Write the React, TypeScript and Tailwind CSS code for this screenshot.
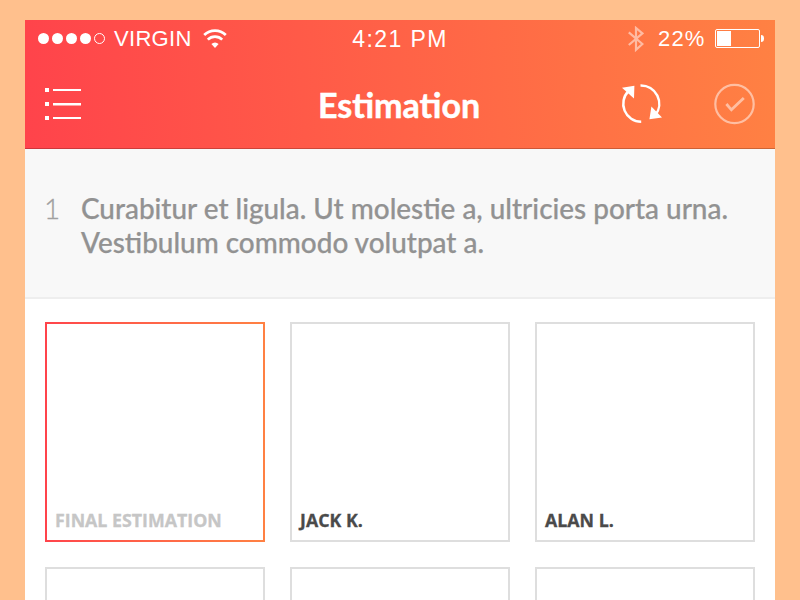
type Estimate = {
  id: string
  label: string
  final?: boolean
}

const estimates: Estimate[] = [
  { id: 'final', label: 'FINAL ESTIMATION', final: true },
  { id: 'jack', label: 'JACK K.' },
  { id: 'alan', label: 'ALAN L.' },
  { id: 'empty-1', label: '' },
  { id: 'empty-2', label: '' },
  { id: 'empty-3', label: '' },
]

function WifiIcon() {
  return (
    <svg width="24" height="20" viewBox="0 0 24 20" fill="none" stroke="#fff" strokeWidth="2.7">
      <path d="M1.2 6a15.4 15.4 0 0 1 21.6 0" />
      <path d="M4.8 10.6a10.2 10.2 0 0 1 14.4 0" />
      <path d="M12 19l-3.6-3.9a5 5 0 0 1 7.2 0z" fill="#fff" stroke="none" />
    </svg>
  )
}

function BluetoothIcon() {
  return (
    <svg width="16" height="27" viewBox="0 0 16 27" fill="none" stroke="#fff" strokeWidth="2.2" opacity="0.5">
      <path d="M.8 6.4L14.4 18 8 23.8V2l6.4 5.4L.8 19" />
    </svg>
  )
}

function BatteryIcon() {
  return (
    <div className="flex items-center gap-px pb-px">
      <div className="h-[19px] w-[45px] rounded-[2px] border border-white p-px">
        <div className="h-full w-[14px] bg-white" />
      </div>
      <div className="h-[7px] w-[3px] rounded-r-full bg-white" />
    </div>
  )
}

function StatusBar() {
  return (
    <div className="grid h-[38px] grid-cols-3 items-center pr-[11px] pl-[13px] font-['Liberation_Sans',Arial,sans-serif] text-[22px] leading-[38px] text-white">
      <div className="flex items-center">
        <div className="flex gap-[3px] pb-px">
          {[1, 2, 3, 4].map((dot) => (
            <span key={dot} className="size-[11px] rounded-full bg-white" />
          ))}
          <span className="size-[11px] rounded-full border border-white" />
        </div>
        <span className="ml-[9px] w-[89px] tracking-[0.3px]">VIRGIN</span>
        <WifiIcon />
      </div>
      <div className="pr-[2px] text-center text-[23px] tracking-[1.4px]">4:21 PM</div>
      <div className="flex items-center justify-end">
        <BluetoothIcon />
        <span className="ml-[14px] w-[57px] tracking-[1.2px]">22%</span>
        <BatteryIcon />
      </div>
    </div>
  )
}

function ListIcon() {
  return (
    <svg width="36" height="32" viewBox="0 0 36 32" fill="#fff">
      <path d="M0 0h4v4H0zM0 14h4v4H0zM0 28h4v4H0z" />
      <path d="M8 1h28v2H8zM8 15h28v2H8zM8 29h28v2H8z" />
      <path d="M8 17h28v1H8z" opacity="0.5" />
    </svg>
  )
}

function RefreshIcon() {
  return (
    <svg width="42" height="40" viewBox="0 0 42 40" fill="none" stroke="#fff" strokeWidth="2.5">
      <path d="M21.2 37.8A18 18 0 0 1 8.6 7" />
      <path d="M20.5 1.4a18.4 18.4 0 0 1 14.8 29.8" />
      <path d="M2 3.8L14.4 1.8 14 14.4z" fill="#fff" stroke="none" />
      <path d="M31.4 22.6L42 33.4l-12.6 1.8z" fill="#fff" stroke="none" />
    </svg>
  )
}

function CheckIcon() {
  return (
    <svg width="42" height="42" viewBox="0 0 42 42" fill="none" stroke="#fff" opacity="0.5">
      <circle cx="21.5" cy="21" r="19.2" strokeWidth="2.2" />
      <path d="M13.4 21l5 5.8L30.8 15" strokeWidth="2.8" />
    </svg>
  )
}

function Header() {
  return (
    <header className="h-[129px] border-b border-black/20 bg-[linear-gradient(86deg,#ff434b,#ff8143)] bg-origin-border">
      <StatusBar />
      <div className="grid h-[92px] grid-cols-3 items-center pr-5 pl-5">
        <button type="button" aria-label="Menu" className="justify-self-start">
          <ListIcon />
        </button>
        <h1 className="pt-[2px] pr-[2px] text-center text-[34px] leading-10 font-bold text-white [-webkit-text-stroke:0.5px_#fff]">
          Estimation
        </h1>
        <div className="flex items-center justify-end gap-[51px]">
          <button type="button" aria-label="Refresh">
            <RefreshIcon />
          </button>
          <button type="button" aria-label="Confirm">
            <CheckIcon />
          </button>
        </div>
      </div>
    </header>
  )
}

function EstimateCard({ label, final }: Estimate) {
  if (final) {
    return (
      <div className="h-[220px] bg-linear-to-r from-[#ff434b] to-[#ff8143] p-[2px]">
        <div className="flex h-full items-end bg-white px-2 pb-2 text-[#c6c6c6]">{label}</div>
      </div>
    )
  }
  return (
    <div className="flex h-[220px] items-end border-2 border-[#dedede] px-2 pb-2 text-[#4a4a4a]">{label}</div>
  )
}

export default function App() {
  return (
    <main className="h-[600px] w-[800px] overflow-hidden bg-[#ffc08d] px-[25px] pt-5 font-[Lato,sans-serif]">
      <div className="h-[580px] overflow-hidden bg-white">
        <Header />
        <section className="flex h-[150px] border-b-2 border-[#eeeeee] bg-[#f8f8f8] pt-[42px] pl-[19px] text-[27.9px] leading-[34px]">
          <span className="w-[37px] font-light text-[#a0a0a0] [-webkit-text-stroke:0.3px]">1</span>
          <p className="font-medium whitespace-nowrap text-[#929292] [-webkit-text-stroke:0.25px]">
            Curabitur et ligula. Ut molestie a, ultricies porta urna.
            <br />
            Vestibulum commodo volutpat a.
          </p>
        </section>
        <section className="grid grid-cols-3 gap-[25px] px-5 pt-[23px] font-['Open_Sans',sans-serif] text-[17.8px] leading-[24px] font-bold [-webkit-text-stroke:0.3px]">
          {estimates.map((estimate) => (
            <EstimateCard key={estimate.id} {...estimate} />
          ))}
        </section>
      </div>
    </main>
  )
}
